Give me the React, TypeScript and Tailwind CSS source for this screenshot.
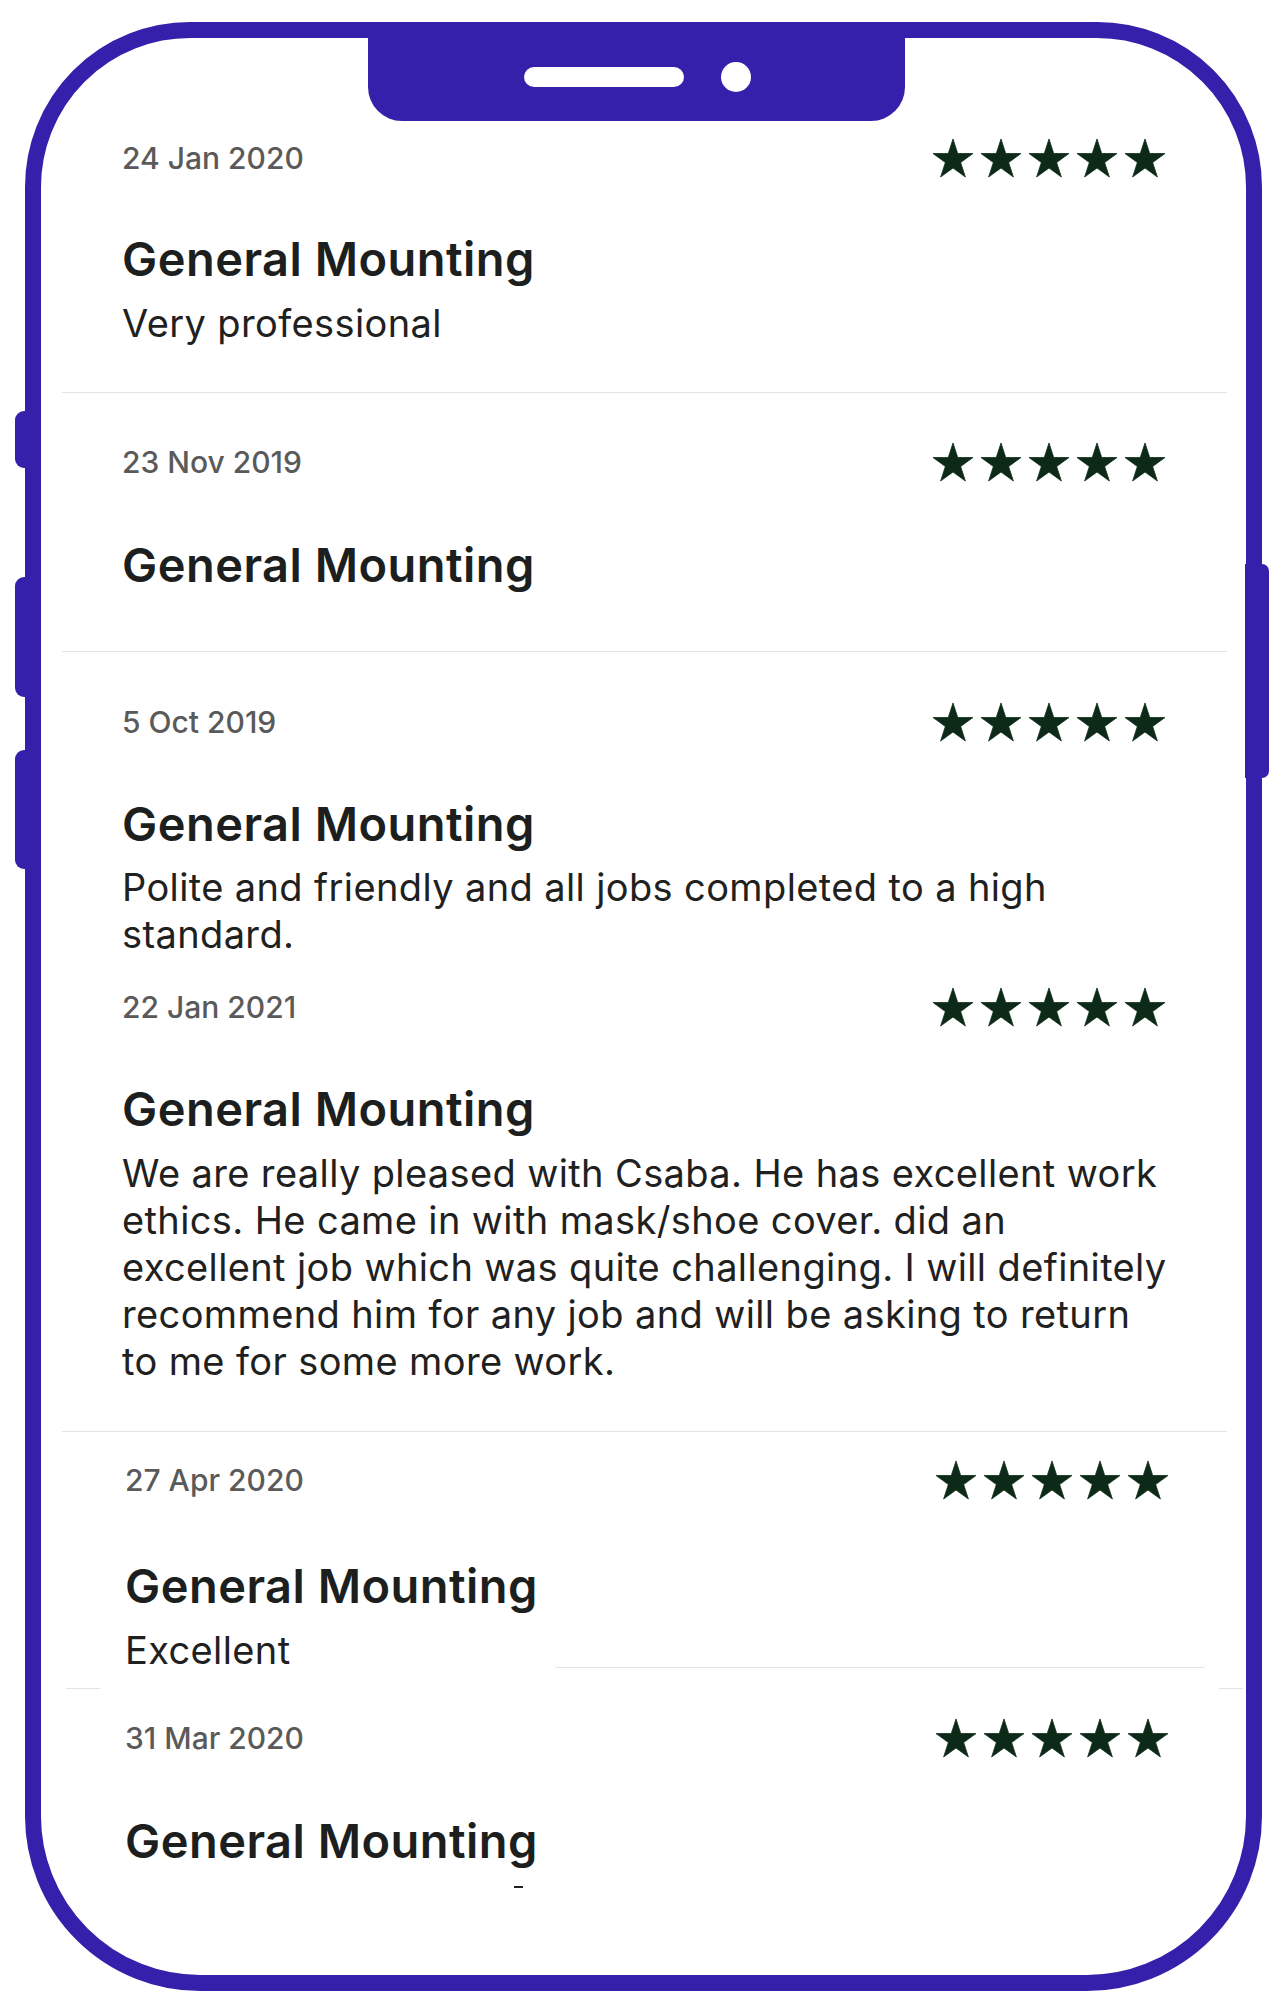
import React from 'react';

const FRAME = 'bg-[#3420ab]';

const Star = () => (
  <svg viewBox="-1 -1 44 42" className="h-[40px] w-[42px]" aria-hidden="true">
    <polygon
      points="21,0 25.97,15.26 42,15.27 29.04,24.71 34,39.98 21,30.55 8,39.98 12.96,24.71 0,15.27 16.03,15.26"
      fill="#0c2a17"
      stroke="#0c2a17"
      strokeWidth="0.8"
      strokeLinejoin="round"
    />
  </svg>
);

const DateRow = ({ date }: { date: string }) => (
  <div className="flex h-[42px] items-center justify-between">
    <span className="text-[30px] font-medium leading-[36px] text-[#5a5a5a]">{date}</span>
    <div className="flex gap-[6px]">
      <Star />
      <Star />
      <Star />
      <Star />
      <Star />
    </div>
  </div>
);

const Title = ({ className = '' }: { className?: string }) => (
  <h2 className={`text-[47px] font-semibold leading-[55px] tracking-[0.01em] text-[#1c1f1e] ${className}`}>
    General Mounting
  </h2>
);

const Body = ({ children, className = '' }: { children: React.ReactNode; className?: string }) => (
  <p className={`w-[1048px] text-[38px] leading-[47px] tracking-[0.01em] text-[#1f2120] ${className}`}>{children}</p>
);

const Sep = () => <div className="h-px bg-[#e3e3e9]" />;

export default function App() {
  return (
    <div className="h-[2003px] w-[1284px] bg-white pl-[25px] pt-[22px] font-['Inter','Noto_Sans',sans-serif]">
      <div className="relative h-[1969px] w-[1237px] rounded-t-[165px] rounded-b-[175px] border-[16px] border-[#3420ab]">
        {/* side buttons */}
        <div className={`absolute -left-[26px] top-[373px] h-[57px] w-[20px] rounded-l-[9px] ${FRAME}`} />
        <div className={`absolute -left-[26px] top-[539px] h-[120px] w-[20px] rounded-l-[9px] ${FRAME}`} />
        <div className={`absolute -left-[26px] top-[712px] h-[119px] w-[20px] rounded-l-[9px] ${FRAME}`} />
        <div className={`absolute -right-[23px] top-[526px] h-[214px] w-[24px] rounded-r-[7px] ${FRAME}`} />

        {/* notch */}
        <div className={`ml-[327px] flex h-[83px] w-[537px] items-center gap-[37px] rounded-b-[34px] pb-[6px] pl-[156px] ${FRAME}`}>
          <div className="h-[20px] w-[160px] rounded-full bg-white" />
          <div className="h-[30px] w-[30px] rounded-full bg-white" />
        </div>

        <div className="ml-[21px] w-[1165px]">
          <div className="pb-[45px] pl-[60px] pr-[61px] pt-[16px]">
            <DateRow date="24 Jan 2020" />
            <Title className="mt-[52px]" />
            <Body className="mt-[14px]">Very professional</Body>
          </div>
          <Sep />

          <div className="pb-[59px] pl-[60px] pr-[61px] pt-[48px]">
            <DateRow date="23 Nov 2019" />
            <Title className="mt-[54px]" />
          </div>
          <Sep />

          <div className="pl-[60px] pr-[61px] pt-[49px]">
            <DateRow date="5 Oct 2019" />
            <Title className="mt-[53px]" />
            <Body className="mt-[13px]">Polite and friendly and all jobs completed to a high standard.</Body>
          </div>

          <div className="pb-[46px] pl-[60px] pr-[61px] pt-[28px]">
            <DateRow date="22 Jan 2021" />
            <Title className="mt-[53px]" />
            <Body className="mt-[14px]">
              We are really pleased with Csaba. He has excellent work ethics. He came in with mask/shoe cover. did an
              excellent job which was quite challenging. I will definitely recommend him for any job and will be asking
              to return to me for some more work.
            </Body>
          </div>
          <Sep />

          <div className="pl-[63px] pr-[58px] pt-[27px]">
            <DateRow date="27 Apr 2020" />
            <Title className="mt-[57px]" />
          </div>
          <div className="mt-[14px] flex items-end pl-[63px]">
            <p className="text-[38px] leading-[47px] tracking-[0.01em] text-[#1f2120]">Excellent</p>
            <div className="mb-[6px] ml-auto mr-[22px] h-px w-[650px] bg-[#e3e3e9]" />
          </div>
          <div className="mt-[14px] -mr-[16px] flex h-px justify-between pl-[4px]">
            <div className="w-[34px] bg-[#e3e3e9]" />
            <div className="w-[24px] bg-[#e3e3e9]" />
          </div>

          <div className="pl-[63px] pr-[58px] pt-[28px]">
            <DateRow date="31 Mar 2020" />
            <Title className="mt-[54px]" />
            <div className="ml-[389px] mt-[18px] h-[2px] w-[9px] bg-[#222]" />
          </div>
        </div>
      </div>
    </div>
  );
}
